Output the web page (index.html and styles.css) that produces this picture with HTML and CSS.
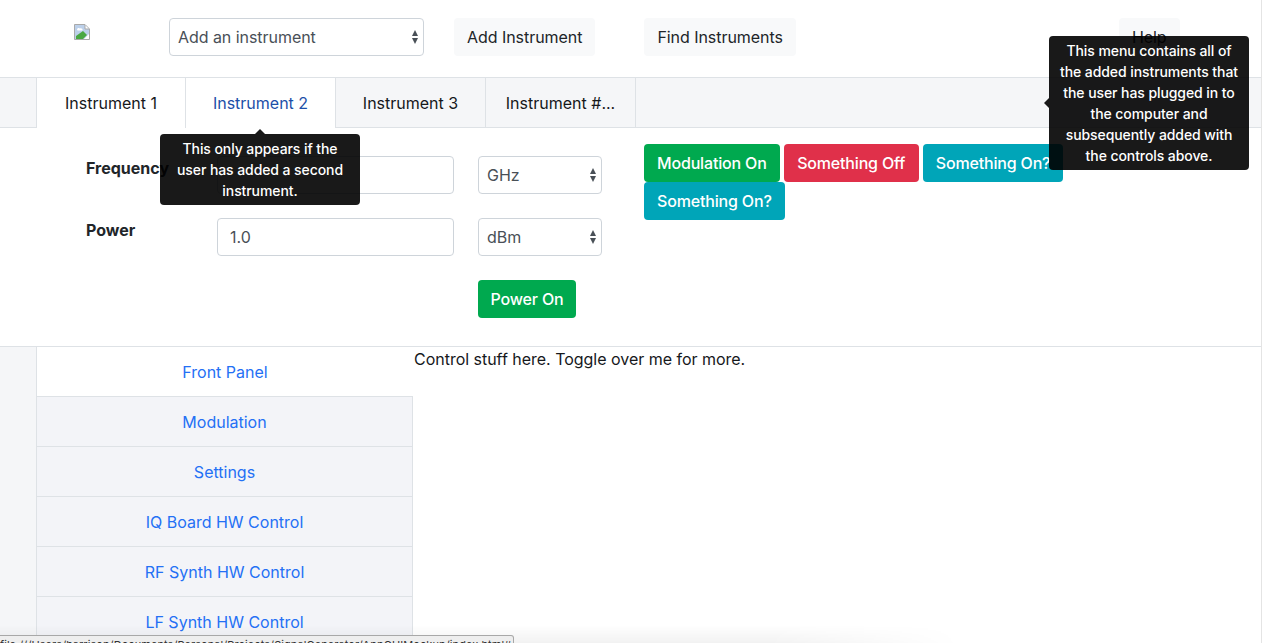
FILE: index.html
```html
<!DOCTYPE html>
<html lang="en">
<head>
    <meta charset="UTF-8">
    <meta name="viewport" content="width=device-width, initial-scale=1.0">
    <title>Signal Generator</title>
    <link rel="stylesheet" href="styles.css">
</head>
<body>
    <div class="page">
        <header class="topbar">
            <div class="logo">
                <svg width="16" height="16" viewBox="0 0 16 16">
                    <path d="M0.5 0.5H11L15.5 5V15.5H0.5Z" fill="#bcd0ea" stroke="#a9a9a9"/>
                    <path d="M3 5.5C3 4 5 3.5 6 4.5C7.5 4 9 5 8.5 6.5H3.5Z" fill="#fff"/>
                    <path d="M2 12L9 7L13 11L9 15H2Z" fill="#4aa843"/>
                    <path d="M10 15L15 10V15Z" fill="#fff"/>
                    <path d="M11 1V5H15" fill="#fff" stroke="#a9a9a9"/>
                </svg>
            </div>
            <div class="select add-select">Add an instrument
                <span class="arrows"></span>
            </div>
            <button class="btn-light add-btn">Add Instrument</button>
            <button class="btn-light find-btn">Find Instruments</button>
            <button class="btn-light help-btn">Help</button>
        </header>

        <nav class="tabs">
            <a class="tab active">Instrument 1</a>
            <a class="tab hover">Instrument 2</a>
            <a class="tab">Instrument 3</a>
            <a class="tab">Instrument #...</a>
        </nav>

        <section class="controls">
            <div class="form-grid">
                <label class="label">Frequency</label>
                <input class="input" type="text" value="">
                <div class="select">GHz<span class="arrows"></span></div>
                <label class="label">Power</label>
                <input class="input" type="text" value="1.0">
                <div class="select">dBm<span class="arrows"></span></div>
                <button class="btn green power-btn">Power On</button>
            </div>
            <div class="toggles">
                <button class="btn green">Modulation On</button>
                <button class="btn red">Something Off</button>
                <button class="btn teal">Something On?</button>
                <button class="btn teal">Something On?</button>
            </div>
        </section>

        <section class="lower">
            <ul class="side-menu">
                <li class="side-item active"><a>Front Panel</a></li>
                <li class="side-item"><a>Modulation</a></li>
                <li class="side-item"><a>Settings</a></li>
                <li class="side-item"><a>IQ Board HW Control</a></li>
                <li class="side-item"><a>RF Synth HW Control</a></li>
                <li class="side-item"><a>LF Synth HW Control</a></li>
            </ul>
            <p class="lower-text">Control stuff here. Toggle over me for more.</p>
        </section>
    </div>

    <div class="tooltip tip-tab">This only appears if the user has added a second instrument.</div>
    <div class="tooltip tip-help">This menu contains all of the added instruments that the user has plugged in to the computer and subsequently added with the controls above.</div>

    <div class="status-shadow"></div>
    <div class="status">file:///Users/harrison/Documents/Personal/Projects/SignalGenerator/AppGUIMockup/index.html#</div>
</body>
</html>
```

FILE: styles.css
```css
html, body {
    height: 100%;
}
body {
    margin: 0;
    overflow: hidden;
    font-family: Inter, "Noto Sans", sans-serif;
    font-size: 16px;
    line-height: 24px;
    color: #212529;
    background-color: #fff;
}
.page {
    width: 1261px;
    height: 643px;
    overflow: hidden;
    border-right: 1px solid #e4e4e4;
}
button {
    font: inherit;
    border: none;
    border-radius: 4px;
    padding: 7px 13px;
    height: 38px;
    white-space: nowrap;
}

.topbar {
    display: flex;
    align-items: flex-start;
    height: 77px;
    padding-top: 18px;
    box-sizing: border-box;
}
.logo {
    margin-left: 74px;
    margin-top: 6px;
    width: 95px;
    height: 16px;
}
.logo svg {
    display: block;
}
.select {
    position: relative;
    box-sizing: border-box;
    height: 38px;
    padding: 6px 8px;
    border: 1px solid #ced4da;
    border-radius: 4px;
    color: #495057;
    background-color: #fff;
    letter-spacing: -0.05px;
}
.arrows {
    position: absolute;
    right: 5px;
    top: 11px;
    width: 0;
    height: 0;
    border-left: 3.5px solid transparent;
    border-right: 3.5px solid transparent;
    border-bottom: 6px solid #495057;
}
.arrows::after {
    content: "";
    position: absolute;
    left: -3.5px;
    top: 8px;
    width: 0;
    height: 0;
    border-left: 3.5px solid transparent;
    border-right: 3.5px solid transparent;
    border-top: 6px solid #495057;
}
.add-select {
    width: 255px;
}
.btn-light {
    background-color: #f8f9fa;
    color: #212529;
    letter-spacing: -0.05px;
}
.add-btn {
    margin-left: 30px;
}
.find-btn {
    margin-left: 49px;
}
.help-btn {
    margin-left: 323px;
}

.tabs {
    display: flex;
    height: 51px;
    box-sizing: border-box;
    padding-left: 36px;
    background-color: #f5f6f8;
    border-top: 1px solid #dee2e6;
    border-bottom: 1px solid #dee2e6;
}
.tab {
    width: 150px;
    box-sizing: border-box;
    height: 50px;
    line-height: 50px;
    text-align: center;
    border-right: 1px solid #dee2e6;
    color: #16181b;
}
.tab:first-child {
    border-left: 1px solid #dee2e6;
}
.tab.active, .tab.hover {
    background-color: #fff;
}
.tab.hover {
    color: #1d4fa8;
}

.controls {
    display: flex;
    height: 219px;
    box-sizing: border-box;
    border-bottom: 1px solid #dee2e6;
}
.form-grid {
    display: grid;
    grid-template-columns: 131px 261px 124px;
    grid-auto-rows: 38px;
    row-gap: 24px;
    align-content: start;
    margin-left: 86px;
    padding-top: 28px;
}
.label {
    grid-column: 1;
    font-weight: 700;
}
.input {
    font: inherit;
    box-sizing: border-box;
    height: 38px;
    margin-right: 24px;
    padding: 6px 12px;
    border: 1px solid #ced4da;
    border-radius: 4px;
    color: #495057;
    outline: none;
}
.btn {
    font-weight: 500;
    color: #fff;
    letter-spacing: -0.17px;
}
.green {
    background-color: #00a94f;
}
.red {
    background-color: #e0304a;
    padding-left: 13.5px;
    padding-right: 13.5px;
}
.teal {
    background-color: #00a5b8;
}
.power-btn {
    grid-column: 3;
    justify-self: start;
    padding-left: 12.5px;
    padding-right: 12.5px;
}
.toggles {
    display: flex;
    flex-wrap: wrap;
    align-content: flex-start;
    column-gap: 4px;
    width: 430px;
    margin-left: 42px;
    padding-top: 16px;
}

.lower {
    display: flex;
    height: 297px;
    padding-left: 36px;
    background: linear-gradient(to right, #f5f6f8 36px, #fff 36px);
}
.side-menu {
    list-style: none;
    margin: 0;
    padding: 0;
    width: 377px;
    flex-shrink: 0;
}
.side-item {
    box-sizing: border-box;
    height: 50px;
    line-height: 50px;
    text-align: center;
    color: #2470f5;
    background-color: #f3f4f8;
    border-left: 1px solid #dee2e6;
    border-right: 1px solid #dee2e6;
    border-bottom: 1px solid #dee2e6;
}
.side-item.active {
    background-color: #fff;
    border-right: none;
}
.lower-text {
    margin: 0 0 0 1px;
    line-height: 24px;
    color: #16181b;
    letter-spacing: -0.02px;
}

.tooltip {
    position: absolute;
    box-sizing: border-box;
    padding: 4px 8px;
    border-radius: 4px;
    background-color: rgba(0, 0, 0, 0.9);
    color: #fff;
    font-size: 14px;
    font-weight: 500;
    line-height: 21px;
    text-align: center;
    letter-spacing: -0.08px;
}
.tooltip::before {
    content: "";
    position: absolute;
    width: 0;
    height: 0;
}
.tip-tab {
    left: 160px;
    top: 134px;
    width: 200px;
}
.tip-tab::before {
    left: 95px;
    top: -5px;
    border-left: 5px solid transparent;
    border-right: 5px solid transparent;
    border-bottom: 5px solid rgba(0, 0, 0, 0.9);
}
.tip-help {
    left: 1049px;
    top: 36px;
    width: 200px;
}
.tip-help::before {
    left: -5px;
    top: 62px;
    border-top: 5px solid transparent;
    border-bottom: 5px solid transparent;
    border-right: 5px solid rgba(0, 0, 0, 0.9);
}

.status-shadow {
    position: fixed;
    left: 0;
    bottom: 0;
    width: 960px;
    height: 18px;
    background: linear-gradient(to bottom, rgba(0, 0, 0, 0), rgba(0, 0, 0, 0.05));
    -webkit-mask-image: linear-gradient(to right, #000 80%, transparent);
    mask-image: linear-gradient(to right, #000 80%, transparent);
}
.status {
    position: fixed;
    left: 0;
    top: 635px;
    width: 514px;
    height: 16px;
    box-sizing: border-box;
    padding-top: 2px;
    overflow: hidden;
    font-size: 11px;
    line-height: 14px;
    letter-spacing: 0.07px;
    white-space: nowrap;
    color: #333;
    background-color: #eeeeee;
    border: 1px solid #a8a8a8;
    border-left: none;
    border-radius: 0 3px 0 0;
}
```
